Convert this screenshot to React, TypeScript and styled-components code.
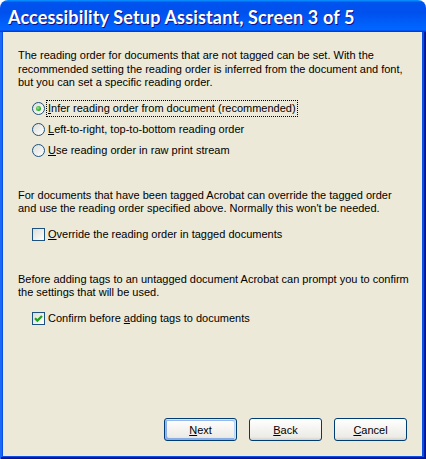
import styled, { createGlobalStyle } from 'styled-components'

const GlobalStyle = createGlobalStyle`
  html, body {
    margin: 0;
    padding: 0;
    background: #fff;
  }
  body {
    width: 426px;
    height: 459px;
    overflow: hidden;
  }
`

function App() {
  return (
    <>
      <GlobalStyle />
      <Window>
        <TitleBar>Accessibility Setup Assistant, Screen 3 of 5</TitleBar>
        <Frame>
          <Body>
            <Paragraph>
              The reading order for documents that are not tagged can be set. With the
              <br />
              recommended setting the reading order is inferred from the document and font,
              <br />
              but you can set a specific reading order.
            </Paragraph>
            <OptionList>
              <Option>
                <RadioCircle $checked />
                <Label $focused><u>I</u>nfer reading order from document (recommended)</Label>
              </Option>
              <Option>
                <RadioCircle />
                <Label><u>L</u>eft-to-right, top-to-bottom reading order</Label>
              </Option>
              <Option>
                <RadioCircle />
                <Label><u>U</u>se reading order in raw print stream</Label>
              </Option>
            </OptionList>
            <Paragraph $top={28}>
              For documents that have been tagged Acrobat can override the tagged order
              <br />
              and use the reading order specified above. Normally this won't be needed.
            </Paragraph>
            <Option $top={8}>
              <CheckBox />
              <Label><u>O</u>verride the reading order in tagged documents</Label>
            </Option>
            <Paragraph $top={28}>
              Before adding tags to an untagged document Acrobat can prompt you to confirm
              <br />
              the settings that will be used.
            </Paragraph>
            <Option $top={8}>
              <CheckBox>
                <svg width="11" height="11" viewBox="0 0 11 11">
                  <path d="M2 5.2 L4.4 7.6 L9 3" fill="none" stroke="#21a121" strokeWidth="2.2" />
                </svg>
              </CheckBox>
              <Label>Confirm before <u>a</u>dding tags to documents</Label>
            </Option>
            <ButtonRow>
              <Button $default><u>N</u>ext</Button>
              <Button><u>B</u>ack</Button>
              <Button><u>C</u>ancel</Button>
            </ButtonRow>
          </Body>
        </Frame>
      </Window>
    </>
  )
}

const Window = styled.div`
  width: 426px;
  height: 459px;
  display: flex;
  flex-direction: column;
  border-radius: 8px 8px 0 0;
  overflow: hidden;
  font-family: Tahoma, "Liberation Sans", Arial, sans-serif;
  font-size: 11px;
  color: #000;
`

const TitleBar = styled.div`
  height: 32px;
  flex-shrink: 0;
  display: flex;
  align-items: center;
  padding: 2px 0 0 8px;
  box-sizing: border-box;
  background: linear-gradient(180deg, #0997ff, #0053ee 8%, #0050ee 40%, #0066ff 88%, #0066ff 93%, #005bff 95%, #003dd7 96%, #003dd7);
  color: #fff;
  font-family: Lato, "Noto Sans", sans-serif;
  font-weight: 700;
  font-size: 18px;
  letter-spacing: 0.15px;
  text-shadow: 1px 1px #0f1089;
  white-space: nowrap;
`

const Frame = styled.div`
  flex: 1;
  min-height: 0;
  display: flex;
  padding: 0 4px 3px 3px;
  background: #0a4fe6;
  box-shadow: inset 1px 0 #1c6af5, inset -1px -1px #00138c, inset -2px -2px #001ea0, inset 2px 0 #166aee;
`

const Body = styled.div`
  flex: 1;
  min-width: 0;
  overflow: hidden;
  display: flex;
  flex-direction: column;
  padding: 17px 15px 15px 15px;
  background: #ece9d8;
`

const Paragraph = styled.p<{ $top?: number }>`
  margin: ${p => p.$top ?? 0}px 0 0;
  line-height: 13.5px;
  white-space: nowrap;
`

const OptionList = styled.div`
  margin-top: 8px;
  display: flex;
  flex-direction: column;
`

const Option = styled.div<{ $top?: number }>`
  height: 21px;
  margin-top: ${p => p.$top ?? 0}px;
  padding-left: 14px;
  display: flex;
  align-items: center;
  gap: 2px;
`

const RadioCircle = styled.span<{ $checked?: boolean }>`
  position: relative;
  width: 13px;
  height: 13px;
  box-sizing: border-box;
  border: 1px solid #1c5180;
  border-radius: 50%;
  background: linear-gradient(135deg, #dcdcd7, #fff);
  flex-shrink: 0;
  &::after {
    content: '';
    display: ${p => (p.$checked ? 'block' : 'none')};
    position: absolute;
    left: 3px;
    top: 3px;
    width: 5px;
    height: 5px;
    border-radius: 50%;
    background: radial-gradient(circle at 40% 40%, #9fe69c, #2fb52c 55%, #1a8a1a);
  }
`

const CheckBox = styled.span`
  width: 13px;
  height: 13px;
  box-sizing: border-box;
  border: 1px solid #1c5180;
  background: linear-gradient(135deg, #dcdcd7, #fff);
  flex-shrink: 0;
  display: flex;
  svg {
    display: block;
  }
`

const Label = styled.span<{ $focused?: boolean }>`
  padding: 1px 1px;
  line-height: 13px;
  white-space: nowrap;
  outline: ${p => (p.$focused ? '1px dotted #000' : 'none')};
  outline-offset: 0;
  u {
    text-decoration: underline;
  }
`

const ButtonRow = styled.div`
  margin-top: auto;
  display: flex;
  justify-content: flex-end;
  gap: 12px;
`

const Button = styled.button<{ $default?: boolean }>`
  width: 73px;
  height: 23px;
  padding: 0;
  border: 1px solid #003c74;
  border-radius: 3px;
  background: linear-gradient(180deg, #fff, #ecebe6 86%, #d6d0c5);
  font: inherit;
  color: #000;
  box-shadow: ${p =>
    p.$default
      ? 'inset -1px 1px #cee7ff, inset 1px 2px #98b8ea, inset -2px 2px #bcd4f6, inset 1px -1px #89ade4, inset 2px -2px #89ade4'
      : 'none'};
`

export default App
